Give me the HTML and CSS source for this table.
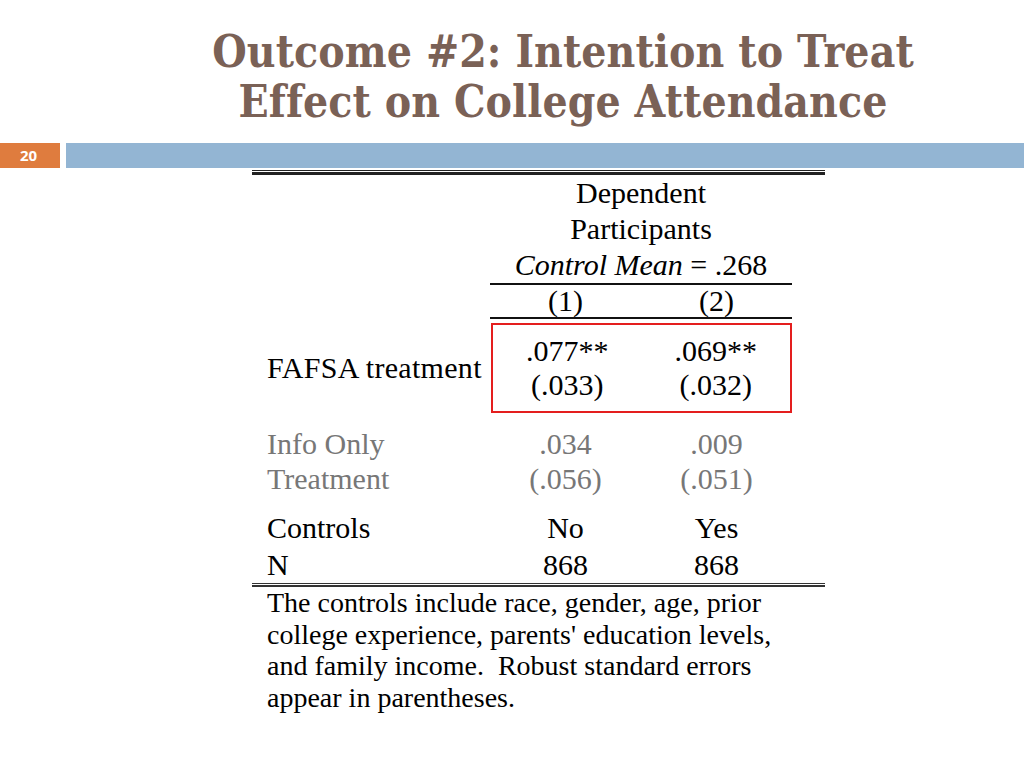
FILE: index.html
```html
<!DOCTYPE html>
<html lang="en">
<head>
<meta charset="utf-8">
<title>Outcome #2</title>
<link rel="stylesheet" href="styles.css">
</head>
<body>
<div class="slide">
  <header class="title-area">
    <h1 class="title">Outcome #2: Intention to Treat<br>Effect on College Attendance</h1>
  </header>
  <div class="band">
    <div class="num">20</div>
    <div class="bar"></div>
  </div>
  <div class="table">
    <div class="rule-top"></div>
    <div class="head">
      <div class="stub"></div>
      <div class="span2">
        <div class="hl">Dependent</div>
        <div class="hl">Participants</div>
        <div class="hl"><i>Control Mean</i> = .268</div>
      </div>
      <div class="pad"></div>
    </div>
    <div class="row cols">
      <div class="stub"></div>
      <div class="pair ruled">
        <div class="c">(1)</div>
        <div class="c">(2)</div>
      </div>
      <div class="pad"></div>
    </div>
    <div class="row fafsa">
      <div class="stub mid">FAFSA treatment</div>
      <div class="pair boxed">
        <div class="c"><div>.077**</div><div>(.033)</div></div>
        <div class="c"><div>.069**</div><div>(.032)</div></div>
      </div>
      <div class="pad"></div>
    </div>
    <div class="row info">
      <div class="stub"><div>Info Only</div><div>Treatment</div></div>
      <div class="pair">
        <div class="c"><div>.034</div><div>(.056)</div></div>
        <div class="c"><div>.009</div><div>(.051)</div></div>
      </div>
      <div class="pad"></div>
    </div>
    <div class="row ctrl">
      <div class="stub">Controls</div>
      <div class="pair">
        <div class="c">No</div>
        <div class="c">Yes</div>
      </div>
      <div class="pad"></div>
    </div>
    <div class="row nrow">
      <div class="stub">N</div>
      <div class="pair">
        <div class="c">868</div>
        <div class="c">868</div>
      </div>
      <div class="pad"></div>
    </div>
    <div class="rule-bottom"></div>
    <p class="note">The controls include race, gender, age, prior<br>college experience, parents' education levels,<br>and family income.&nbsp; Robust standard errors<br>appear in parentheses.</p>
  </div>
</div>
</body>
</html>
```

FILE: styles.css
```css
html, body {
  margin: 0;
  padding: 0;
  background: #ffffff;
}

.slide {
  width: 1024px;
  height: 768px;
  overflow: hidden;
  font-family: "Liberation Serif", "Times New Roman", serif;
  color: #000;
}

.title-area {
  height: 143px;
  box-sizing: border-box;
  padding: 27px 0 0 102px;
}

.title {
  margin: 0;
  text-align: center;
  font-family: "DejaVu Serif Condensed", "DejaVu Serif", serif;
  font-weight: bold;
  font-size: 44px;
  line-height: 50px;
  color: #7a6156;
  letter-spacing: 0.1px;
}

.band {
  display: flex;
  height: 25px;
  gap: 6px;
}

.num {
  width: 60px;
  background: #df7c3e;
  color: #fff;
  font-family: "Open Sans", "Liberation Sans", sans-serif;
  font-weight: bold;
  font-size: 15px;
  line-height: 25px;
  text-align: center;
  box-sizing: border-box;
  padding-right: 3px;
}

.bar {
  flex: 1;
  background: #93b5d3;
}

.table {
  width: 573px;
  margin-left: 252px;
  margin-top: 2px;
  font-size: 30px;
}

.rule-top {
  height: 1px;
  border-top: 1px solid #222;
  border-bottom: 3px solid #222;
}

.head, .row {
  display: grid;
  grid-template-columns: 238px 302px 33px;
}

.span2 {
  text-align: center;
  border-bottom: 2px solid #111;
}

.hl {
  height: 36px;
  line-height: 36px;
}

.pair {
  display: grid;
  grid-template-columns: 1fr 1fr;
}

.c {
  text-align: center;
}

.stub {
  padding-left: 15px;
  white-space: nowrap;
}

.cols .pair {
  line-height: 32px;
  border-bottom: 2px solid #111;
}

.fafsa {
  margin-top: 4px;
}

.fafsa .stub {
  align-self: center;
  letter-spacing: 0.3px;
}

.boxed {
  box-sizing: border-box;
  border: 2px solid #e41e1e;
  margin-left: 1px;
  padding: 9px 0;
  line-height: 34px;
}

.info {
  margin-top: 13px;
  color: #777;
  line-height: 35px;
}

.ctrl {
  margin-top: 13px;
  line-height: 38px;
}

.nrow {
  line-height: 36px;
}

.rule-bottom {
  height: 1px;
  border-top: 1px solid #333;
  border-bottom: 2px solid #333;
}

.note {
  margin: 0;
  padding-left: 15px;
  font-size: 28px;
  line-height: 31.6px;
  white-space: nowrap;
}
```
